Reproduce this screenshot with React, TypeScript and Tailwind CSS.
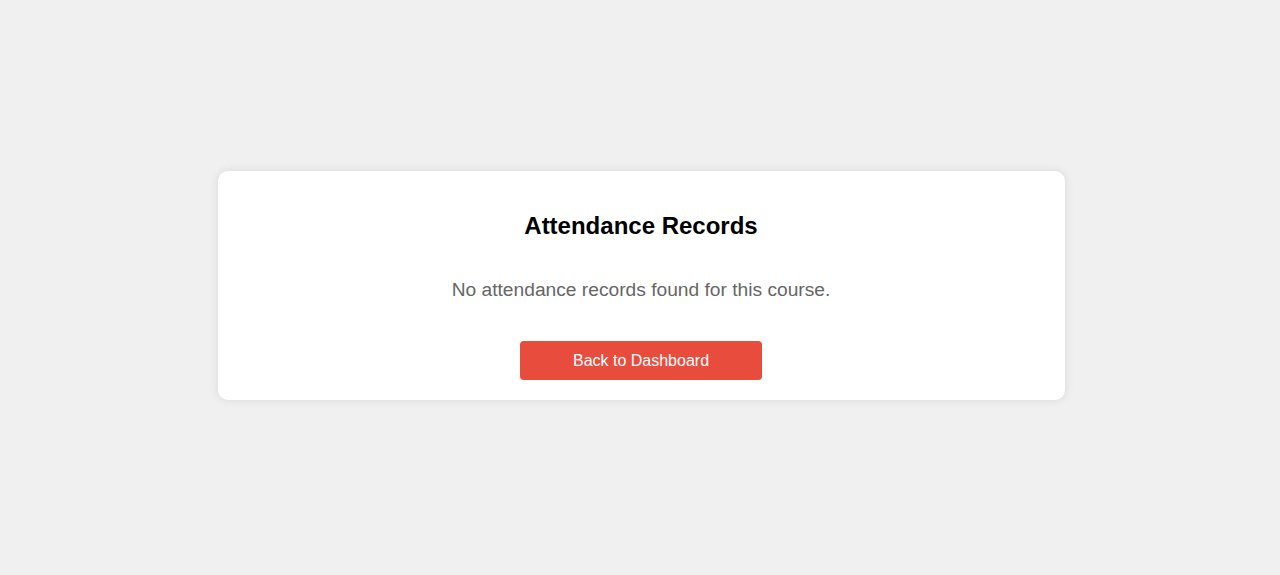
export default function App() {
  return (
    <div
      className="flex min-h-screen w-full items-center justify-center bg-[#f0f0f0]"
      style={{ fontFamily: '"Liberation Sans", Arial, sans-serif' }}
    >
      <div className="flex w-[847px] flex-col items-center rounded-[10px] bg-white px-5 pt-[20px] pb-[20px] shadow-[0_0_10px_rgba(0,0,0,0.1)] translate-x-[1px] -translate-y-[2px]">
        <h2 className="mt-[21px] text-[24px] font-bold leading-[28px] text-black">
          Attendance Records
        </h2>
        <p className="mt-[38px] text-[19.2px] leading-[23px] text-[#666666]">
          No attendance records found for this course.
        </p>
        <button className="mt-[40px] h-[39px] w-[242px] rounded-[4px] bg-[#e74c3c] text-[16px] text-white">
          Back to Dashboard
        </button>
      </div>
    </div>
  );
}
